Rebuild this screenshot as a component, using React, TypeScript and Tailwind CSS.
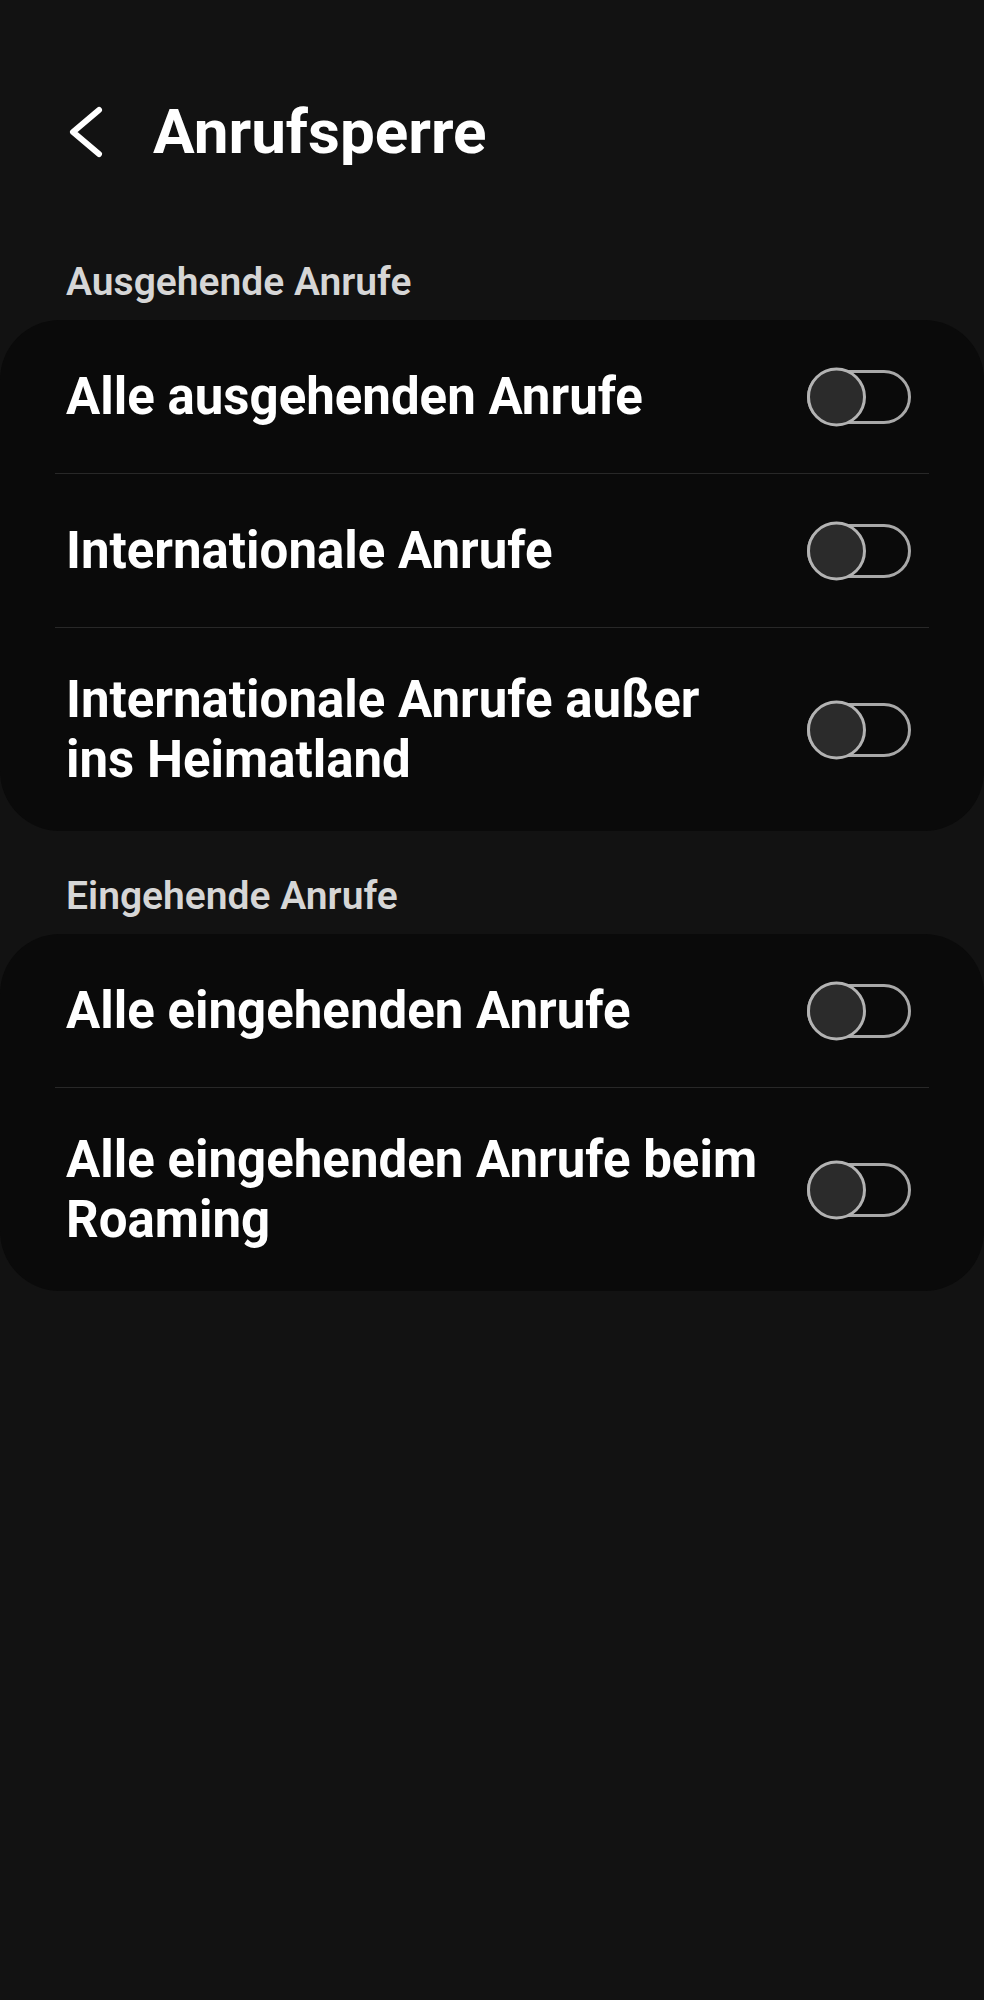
const sections = [
  {
    title: "Ausgehende Anrufe",
    items: [
      "Alle ausgehenden Anrufe",
      "Internationale Anrufe",
      "Internationale Anrufe außer ins Heimatland",
    ],
  },
  {
    title: "Eingehende Anrufe",
    items: ["Alle eingehenden Anrufe", "Alle eingehenden Anrufe beim Roaming"],
  },
];

function Toggle() {
  return (
    <svg width="108" height="62" viewBox="0 0 108 62" className="shrink-0 ml-auto">
      <rect x="3.5" y="5.5" width="101" height="51" rx="25.5" fill="none" stroke="#a8a8a8" strokeWidth="3" />
      <circle cx="31.5" cy="31" r="28" fill="#2b2b2b" stroke="#b3b3b3" strokeWidth="3" />
    </svg>
  );
}

function Row({ label, twoLine }: { label: string; twoLine: boolean }) {
  return (
    <div
      className={`flex items-center pl-[66px] pr-[71px] ${twoLine ? "h-[203px]" : "h-[153px]"}`}
    >
      <div className="w-[700px] text-[51px] leading-[60px] font-bold text-white">{label}</div>
      <Toggle />
    </div>
  );
}

export default function App() {
  return (
    <div
      className="min-h-[2000px] w-[984px] bg-[#121212]"
      style={{ fontFamily: "Roboto, 'Noto Sans', sans-serif" }}
    >
      <div className="flex items-center pt-[99px] h-[165px]">
        <div className="w-[153px] flex justify-start pl-[68px]">
          <svg width="40" height="56" viewBox="0 0 40 56">
            <polyline
              points="31,6 5,28 31,50"
              fill="none"
              stroke="#ffffff"
              strokeWidth="6"
              strokeLinecap="round"
              strokeLinejoin="round"
            />
          </svg>
        </div>
        <h1 className="text-[62px] leading-[66px] font-bold text-white">Anrufsperre</h1>
      </div>

      {sections.map((s, si) => (
        <div key={s.title}>
          <div
            className={`pl-[66px] text-[39px] leading-[46px] font-semibold text-[#d6d6d6] mb-[15px] ${si === 0 ? "mt-[94px]" : "mt-[42px]"}`}
          >
            {s.title}
          </div>
          <div className="bg-[#0a0a0a] rounded-[60px]">
            {s.items.map((it, i) => (
              <div key={it}>
                {i > 0 && <div className="mx-[55px] h-px bg-[#282828]" />}
                <Row label={it} twoLine={it.length > 26} />
              </div>
            ))}
          </div>
        </div>
      ))}
    </div>
  );
}
